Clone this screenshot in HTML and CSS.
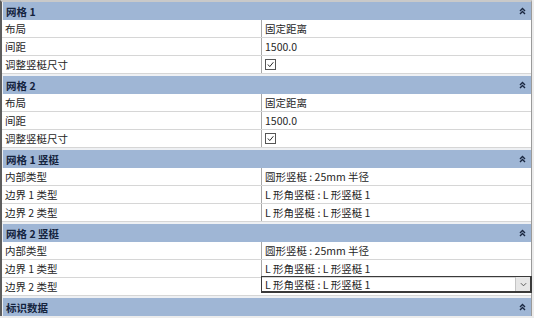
FILE: index.html
```html
<!DOCTYPE html>
<html lang="zh">
<head>
<meta charset="utf-8">
<link rel="stylesheet" href="styles.css">
</head>
<body>
<div class="panel">
  <div class="group">
    <div class="head"><span>网格 1</span><svg class="chev" viewBox="0 0 7 8"><path d="M1 4 L3.5 1.5 L6 4 M1 7 L3.5 4.5 L6 7"/></svg></div>
    <div class="row"><div class="k">布局</div><div class="v">固定距离</div></div>
    <div class="row"><div class="k">间距</div><div class="v">1500.0</div></div>
    <div class="row"><div class="k">调整竖梃尺寸</div><div class="v"><span class="cb"><svg viewBox="0 0 12 12"><path d="M2.5 6 L5 8.8 L9.8 3"/></svg></span></div></div>
  </div>
  <div class="group">
    <div class="head"><span>网格 2</span><svg class="chev" viewBox="0 0 7 8"><path d="M1 4 L3.5 1.5 L6 4 M1 7 L3.5 4.5 L6 7"/></svg></div>
    <div class="row"><div class="k">布局</div><div class="v">固定距离</div></div>
    <div class="row"><div class="k">间距</div><div class="v">1500.0</div></div>
    <div class="row"><div class="k">调整竖梃尺寸</div><div class="v"><span class="cb"><svg viewBox="0 0 12 12"><path d="M2.5 6 L5 8.8 L9.8 3"/></svg></span></div></div>
  </div>
  <div class="group">
    <div class="head"><span>网格 1 竖梃</span><svg class="chev" viewBox="0 0 7 8"><path d="M1 4 L3.5 1.5 L6 4 M1 7 L3.5 4.5 L6 7"/></svg></div>
    <div class="row"><div class="k">内部类型</div><div class="v">圆形竖梃 : 25mm 半径</div></div>
    <div class="row"><div class="k">边界 1 类型</div><div class="v">L 形角竖梃 : L 形竖梃 1</div></div>
    <div class="row"><div class="k">边界 2 类型</div><div class="v">L 形角竖梃 : L 形竖梃 1</div></div>
  </div>
  <div class="group">
    <div class="head"><span>网格 2 竖梃</span><svg class="chev" viewBox="0 0 7 8"><path d="M1 4 L3.5 1.5 L6 4 M1 7 L3.5 4.5 L6 7"/></svg></div>
    <div class="row"><div class="k">内部类型</div><div class="v">圆形竖梃 : 25mm 半径</div></div>
    <div class="row"><div class="k">边界 1 类型</div><div class="v">L 形角竖梃 : L 形竖梃 1</div></div>
    <div class="row"><div class="k">边界 2 类型</div><div class="v sel"><span class="seltext">L 形角竖梃 : L 形竖梃 1</span><span class="dd"><svg viewBox="0 0 10 8"><path d="M2 2.5 L5 5.5 L8 2.5"/></svg></span></div></div>
  </div>
  <div class="group">
    <div class="head"><span>标识数据</span><svg class="chev" viewBox="0 0 7 8"><path d="M1 4 L3.5 1.5 L6 4 M1 7 L3.5 4.5 L6 7"/></svg></div>
  </div>
</div>
</body>
</html>
```
FILE: styles.css
```css
html, body {
  margin: 0;
  padding: 0;
  background: #ececec;
}
body {
  width: 534px;
  height: 318px;
  overflow: hidden;
  font-family: "Noto Sans CJK SC", "Noto Sans", sans-serif;
  font-size: 10.5px;
  color: #262626;
}
.panel {
  width: 529px;
  border-left: 2px solid #5e5e5e;
  border-right: 1px solid #9a9a9a;
  border-top: 2px solid #c9c9c9;
  background: #eef0f3;
  display: flex;
  flex-direction: column;
  gap: 2px;
}
.head {
  height: 18px;
  background: #9fb6d5;
  display: flex;
  align-items: center;
  justify-content: space-between;
  padding: 0 5px 0 3px;
  margin-left: 1px;
  font-weight: bold;
  color: #14233d;
}
.chev {
  width: 7px;
  height: 8px;
  fill: none;
  stroke: #1a2740;
  stroke-width: 1.4;
}
.row {
  display: grid;
  grid-template-columns: 259px 1fr;
  height: 18px;
  box-sizing: border-box;
  border-bottom: 1px solid #d6d6d6;
  background: #fff;
}
.k, .v {
  display: flex;
  align-items: center;
  padding-left: 3px;
  white-space: nowrap;
}
.v {
  border-left: 1px solid #a8a8a8;
  padding-left: 3px;
}
.cb {
  width: 11px;
  height: 11px;
  border: 1px solid #555;
  box-sizing: border-box;
  display: flex;
  background: #fff;
}
.cb svg {
  width: 100%;
  height: 100%;
  fill: none;
  stroke: #222;
  stroke-width: 1.3;
}
.sel {
  border: 1px solid #3a3a3a;
  border-bottom-width: 2px;
  border-right-width: 2px;
  margin-top: -2px;
  height: 17px;
  box-sizing: border-box;
  justify-content: space-between;
  padding-right: 0;
  margin-right: -1px;
}
.dd {
  width: 14px;
  height: 100%;
  background: #e6e6e6;
  border-left: 1px solid #c4c4c4;
  display: flex;
  align-items: center;
  justify-content: center;
}
.dd svg {
  width: 9px;
  height: 7px;
  fill: none;
  stroke: #555;
  stroke-width: 1.1;
}
```
